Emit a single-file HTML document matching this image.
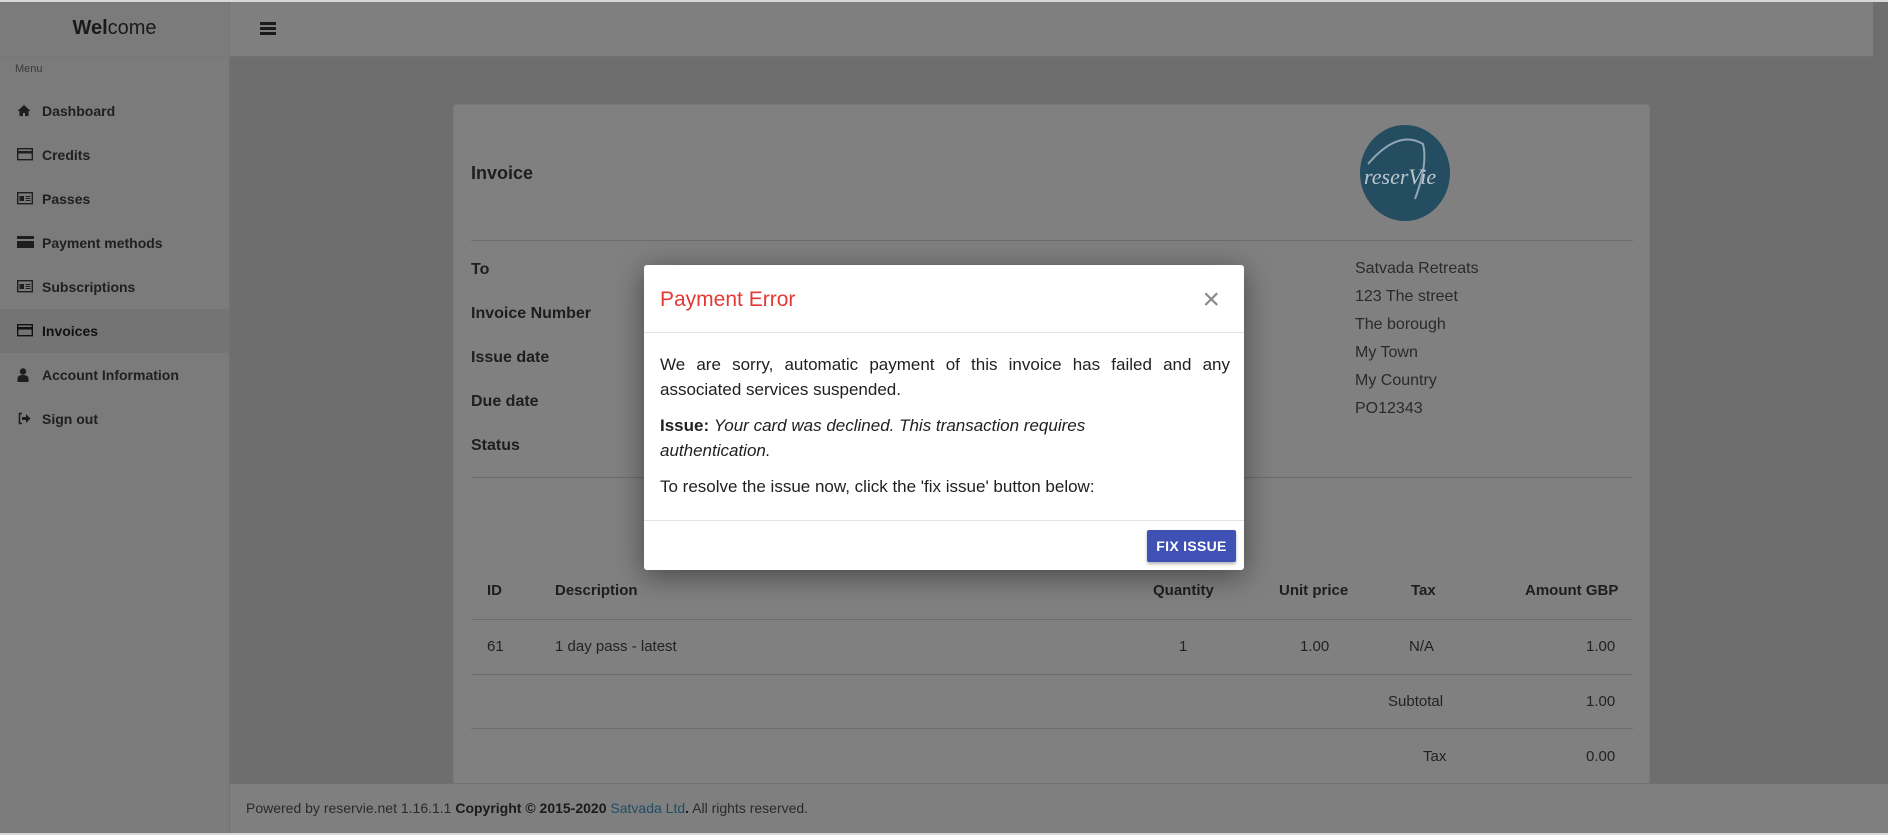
<!DOCTYPE html>
<html><head><meta charset="utf-8"><style>
*{margin:0;padding:0;box-sizing:border-box}
body{width:1888px;height:835px;overflow:hidden;background:#6e6e6e;font-family:"Liberation Sans",sans-serif;position:relative;color:#1e1e1e}
.topline{position:absolute;left:0;top:0;width:1888px;height:2px;background:#d8d8d8}
.botline{position:absolute;left:0;top:833px;width:1888px;height:2px;background:#d8d8d8}
.brand{position:absolute;left:0;top:2px;width:230px;height:55px;background:#7b7b7b;border-right:1px solid #767676;border-bottom:1px solid #777;text-align:center;font-size:20px;line-height:52px;color:#1a1a1a}
.brand b{font-weight:bold}
.topbar{position:absolute;left:230px;top:2px;width:1643px;height:55px;background:#7f7f7f;border-bottom:1px solid #727272}
.burger{position:absolute;left:260px;top:22px;width:16px}
.burger i{display:block;height:3px;background:#1a1a1a;margin-bottom:2px}
.side{position:absolute;left:0;top:57px;width:230px;height:776px;background:#7b7b7b;border-right:1px solid #727272}
.menu{position:absolute;left:15px;top:6px;font-size:11px;color:#3a3a3a}
.item{position:absolute;left:0;width:230px;height:44px;font-size:14px;font-weight:bold;color:#202020;line-height:44px;padding-left:42px}
.item.act{background:#747474;color:#111}
.item svg{position:absolute;left:17px;top:15px}
.card{position:absolute;left:453px;top:104px;width:1197px;height:690px;background:#808080;border:1px solid #787878;border-radius:3px}
.abs{position:absolute;white-space:nowrap}
.lbl{font-size:16px;font-weight:bold;color:#1e1e1e}
.hr{position:absolute;height:1px;background:#6c6c6c}
.addr{font-size:16px;color:#2a2a2a}
.th{font-size:15px;font-weight:bold;color:#1e1e1e}
.td{font-size:15px;color:#222}
.footer{position:absolute;left:230px;top:783px;width:1658px;height:50px;background:#7f7f7f;border-top:1px solid #707070;font-size:14px;color:#2a2a2a;padding-left:16px;line-height:48px}
.footer b{color:#1a1a1a}.footer span{color:#204d66}
.modal{position:absolute;left:644px;top:265px;width:600px;height:305px;background:#fff;border-radius:3px;box-shadow:0 6px 30px rgba(0,0,0,.45)}
.mt{position:absolute;left:16px;top:23px;font-size:21px;color:#e53935}
.x{position:absolute;right:24px;top:20px;font-size:30px;color:#888;font-weight:300;line-height:30px}
.mb{position:absolute;left:16px;right:14px;top:87px;font-size:17px;color:#212121;line-height:25px}
.mb p{margin-bottom:11px;text-align:justify}
.btn{position:absolute;left:503px;top:265px;width:89px;height:32px;background:#3f51b5;color:#fff;font-size:14px;font-weight:bold;text-align:center;line-height:32px;border-radius:2px;box-shadow:0 2px 3px rgba(0,0,0,.3);letter-spacing:.3px}
</style></head><body>
<div class="topline"></div>
<div class="brand"><b>Wel</b>come</div>
<div class="topbar"></div>
<div class="burger"><i></i><i></i><i></i></div>
<div class="side">
<div class="menu">Menu</div>
<div class="item" style="top:32px"><svg width="14" height="13" viewBox="0 0 14 13"><path d="M7 1L0.5 7h2v5h3.5V9h2v3h3.5V7h2z" fill="#1e1e1e"/></svg>Dashboard</div>
<div class="item" style="top:76px"><svg width="16" height="13" viewBox="0 0 16 13"><rect x="0.7" y="0.7" width="14.6" height="11" fill="none" stroke="#1e1e1e" stroke-width="1.4"/><rect x="1" y="3" width="14" height="2.5" fill="#1e1e1e"/></svg>Credits</div>
<div class="item" style="top:120px"><svg width="16" height="13" viewBox="0 0 16 13"><rect x="0.7" y="0.7" width="14.6" height="11" fill="none" stroke="#1e1e1e" stroke-width="1.4"/><rect x="2.5" y="4" width="4.5" height="5" fill="#1e1e1e"/><path d="M8.5 4.5h5M8.5 6.5h5M8.5 8.5h5" stroke="#1e1e1e"/></svg>Passes</div>
<div class="item" style="top:164px"><svg width="17" height="12" viewBox="0 0 17 12"><rect x="0" y="0" width="17" height="12" fill="#1e1e1e"/><rect x="0" y="3" width="17" height="2" fill="#7b7b7b"/></svg>Payment methods</div>
<div class="item" style="top:208px"><svg width="16" height="13" viewBox="0 0 16 13"><rect x="0.7" y="0.7" width="14.6" height="11" fill="none" stroke="#1e1e1e" stroke-width="1.4"/><rect x="2.5" y="4" width="4.5" height="5" fill="#1e1e1e"/><path d="M8.5 4.5h5M8.5 6.5h5M8.5 8.5h5" stroke="#1e1e1e"/></svg>Subscriptions</div>
<div class="item act" style="top:252px"><svg width="16" height="13" viewBox="0 0 16 13"><rect x="0.7" y="0.7" width="14.6" height="11" fill="none" stroke="#111" stroke-width="1.4"/><rect x="1" y="3" width="14" height="2.5" fill="#111"/></svg>Invoices</div>
<div class="item" style="top:296px"><svg width="12" height="14" viewBox="0 0 12 14"><circle cx="6" cy="3.5" r="3.2" fill="#1e1e1e"/><path d="M0.5 14v-3.5q0-3.5 5.5-3.5t5.5 3.5V14z" fill="#1e1e1e"/></svg>Account Information</div>
<div class="item" style="top:340px"><svg width="14" height="13" viewBox="0 0 14 13"><path d="M5 1.5H2.5v10H5" fill="none" stroke="#1e1e1e" stroke-width="1.6"/><path d="M5 5h4V2l4.5 4.5L9 11V8H5z" fill="#1e1e1e"/></svg>Sign out</div>
</div>
<div class="card"></div>
<div class="abs" style="left:471px;top:163px;font-size:18px;font-weight:bold;color:#1e1e1e">Invoice</div>
<svg class="abs" style="left:1358px;top:124px" width="94" height="98" viewBox="0 0 94 98"><ellipse cx="47" cy="49" rx="45" ry="48" fill="#254d62"/><path d="M10 40Q40 5 65 20Q70 40 57 75" fill="none" stroke="#8fa7b3" stroke-width="2"/><text x="6" y="60" font-family="Liberation Serif,serif" font-style="italic" font-size="22" fill="#b9c6cc">reserVie</text></svg>
<div class="hr" style="left:471px;top:240px;width:1162px"></div>
<div class="abs lbl" style="left:471px;top:261px">To</div>
<div class="abs lbl" style="left:471px;top:305px">Invoice Number</div>
<div class="abs lbl" style="left:471px;top:349px">Issue date</div>
<div class="abs lbl" style="left:471px;top:393px">Due date</div>
<div class="abs lbl" style="left:471px;top:437px">Status</div>
<div class="abs addr" style="left:1355px;top:260px">Satvada Retreats</div>
<div class="abs addr" style="left:1355px;top:288px">123 The street</div>
<div class="abs addr" style="left:1355px;top:316px">The borough</div>
<div class="abs addr" style="left:1355px;top:344px">My Town</div>
<div class="abs addr" style="left:1355px;top:372px">My Country</div>
<div class="abs addr" style="left:1355px;top:400px">PO12343</div>
<div class="hr" style="left:471px;top:477px;width:1162px"></div>
<div class="abs th" style="left:487px;top:582px">ID</div>
<div class="abs th" style="left:555px;top:582px">Description</div>
<div class="abs th" style="left:1153px;top:582px">Quantity</div>
<div class="abs th" style="left:1279px;top:582px">Unit price</div>
<div class="abs th" style="left:1411px;top:582px">Tax</div>
<div class="abs th" style="left:1525px;top:582px">Amount GBP</div>
<div class="hr" style="left:471px;top:619px;width:1162px"></div>
<div class="abs td" style="left:487px;top:638px">61</div>
<div class="abs td" style="left:555px;top:638px">1 day pass - latest</div>
<div class="abs td" style="left:1179px;top:638px">1</div>
<div class="abs td" style="left:1300px;top:638px">1.00</div>
<div class="abs td" style="left:1409px;top:638px">N/A</div>
<div class="abs td" style="left:1586px;top:638px">1.00</div>
<div class="hr" style="left:471px;top:674px;width:1162px"></div>
<div class="abs td" style="left:1388px;top:693px">Subtotal</div>
<div class="abs td" style="left:1586px;top:693px">1.00</div>
<div class="hr" style="left:471px;top:728px;width:1162px"></div>
<div class="abs td" style="left:1423px;top:748px">Tax</div>
<div class="abs td" style="left:1586px;top:748px">0.00</div>
<div class="footer">Powered by reservie.net 1.16.1.1 <b>Copyright © 2015-2020</b> <span>Satvada Ltd</span><b>.</b> All rights reserved.</div>
<div class="botline"></div>
<div class="modal">
<div class="mt">Payment Error</div>
<div class="x">×</div>
<div class="hr" style="left:0;top:67px;width:600px;background:#e3e3e3"></div>
<div class="mb">
<p>We are sorry, automatic payment of this invoice has failed and any associated services suspended.</p>
<p style="text-align:left"><b>Issue:</b> <i>Your card was declined. This transaction requires<br>authentication.</i></p>
<p>To resolve the issue now, click the 'fix issue' button below:</p>
</div>
<div class="hr" style="left:0;top:255px;width:600px;background:#e3e3e3"></div>
<div class="btn">FIX ISSUE</div>
</div>
</body></html>
